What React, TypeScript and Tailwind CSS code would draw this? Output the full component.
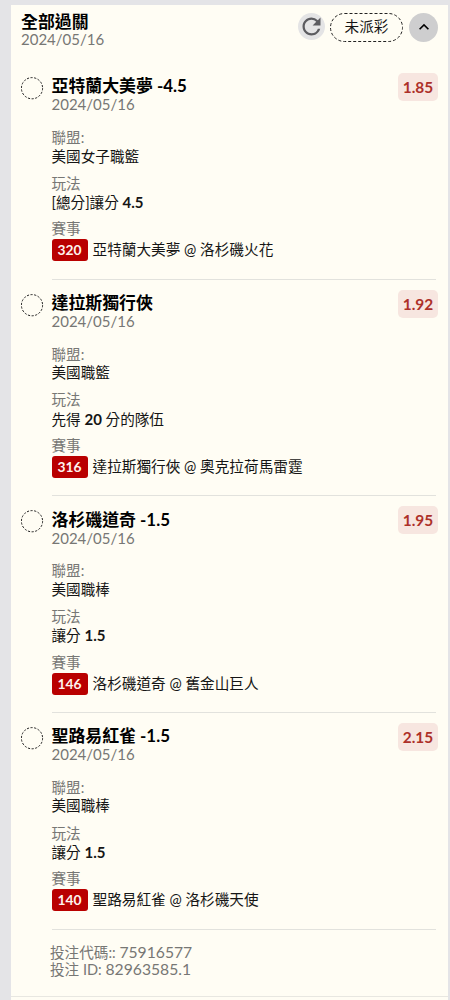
import { MdRefresh, MdKeyboardArrowUp } from "react-icons/md";
import type { ReactNode } from "react";

type Bet = {
  title: string;
  odds: string;
  league: string;
  market: ReactNode;
  code: string;
  match: string;
};

const strong = (text: string) => <b className="text-[15px] font-bold">{text}</b>;

const bets: Bet[] = [
  { title: "亞特蘭大美夢 -4.5", odds: "1.85", league: "美國女子職籃", market: <>[總分]讓分 {strong("4.5")}</>, code: "320", match: "亞特蘭大美夢 @ 洛杉磯火花" },
  { title: "達拉斯獨行俠", odds: "1.92", league: "美國職籃", market: <>先得 {strong("20")} 分的隊伍</>, code: "316", match: "達拉斯獨行俠 @ 奧克拉荷馬雷霆" },
  { title: "洛杉磯道奇 -1.5", odds: "1.95", league: "美國職棒", market: <>讓分 {strong("1.5")}</>, code: "146", match: "洛杉磯道奇 @ 舊金山巨人" },
  { title: "聖路易紅雀 -1.5", odds: "2.15", league: "美國職棒", market: <>讓分 {strong("1.5")}</>, code: "140", match: "聖路易紅雀 @ 洛杉磯天使" },
];

function Field({ label, children }: { label: string; children: ReactNode }) {
  return (
    <div className="mb-[9px]">
      <div className="h-[18.3px] leading-[18.3px] text-[#777774]">{label}</div>
      <div className="h-[18.3px] leading-[18.3px]">{children}</div>
    </div>
  );
}

function BetItem({ bet }: { bet: Bet }) {
  return (
    <section className="flex h-[216.6px] shrink-0 pl-[9.5px] pr-[10px]">
      <svg className="mt-[14px] mr-[8px] h-[23px] w-[23px] shrink-0" viewBox="0 0 23 23" fill="none">
        <circle cx="11" cy="11.2" r="10.6" stroke="#222" strokeWidth="1" strokeDasharray="2.2 1.5" />
      </svg>
      <div className="relative mr-[2px] min-w-0 flex-1 border-b border-[#e2e2dd] pt-[13.2px]">
        <h2 className="h-[19px] text-[16.9px] leading-[19px] font-bold text-black">{bet.title}</h2>
        <div className="mb-[15.5px] h-[18.3px] text-[15px] leading-[18.3px] text-[#777774]">2024/05/16</div>
        <Field label="聯盟:">{bet.league}</Field>
        <Field label="玩法">{bet.market}</Field>
        <div className="h-[18.3px] leading-[18.3px] text-[#777774]">賽事</div>
        <div className="mt-[0.6px] flex items-center gap-[5px] leading-[22px]">
          <span className="h-[22px] w-[36px] rounded-[3px] bg-[#b90000] text-center text-[13.8px] font-bold text-[#fff3ee]">{bet.code}</span>
          <span className="text-[14.65px]">{bet.match}</span>
        </div>
        <span className="absolute top-[10px] right-[-2px] h-[28px] w-[40px] rounded-[5px] bg-[#f7e6e0] text-center text-[15.4px] leading-[28px] font-bold text-[#ad3029]">
          {bet.odds}
        </span>
      </div>
    </section>
  );
}

export default function App() {
  return (
    <div className="h-[1000px] overflow-hidden bg-[#e4e4e7] pt-[5px] pr-[2px] pl-[11px] font-['Lato','Noto_Sans_CJK_TC',sans-serif] text-[14.6px] text-[#151515]" lang="zh-Hant">
      <main className="flex h-[995px] flex-col bg-[#fffdf4]">
        <header className="flex h-[58.3px] shrink-0 items-start justify-between pt-[7.5px] pr-[10px] pl-[10px]">
          <div className="-mt-px">
            <h1 className="h-[18.5px] text-[16.9px] leading-[19px] font-bold text-black">全部過關</h1>
            <div className="text-[15px] leading-[18px] text-[#777774]">2024/05/16</div>
          </div>
          <div className="flex items-center gap-[6px]">
            <button aria-label="重新整理" className="-mr-px -mt-px flex h-[27px] w-[27px] items-center justify-center rounded-full bg-[#e4e4e5] text-[#5c5c60]">
              <MdRefresh size={27} />
            </button>
            <span className="relative flex h-[29px] w-[73px] items-center justify-center">
              <svg className="absolute inset-0" width="73" height="29" fill="none">
                <rect x="0.5" y="0.5" width="72" height="28" rx="14" stroke="#222" strokeDasharray="3 2" />
              </svg>
              未派彩
            </span>
            <button aria-label="收合" className="flex h-[29px] w-[29px] items-center justify-center rounded-full bg-[#cececf] text-black">
              <MdKeyboardArrowUp size={20} />
            </button>
          </div>
        </header>
        {bets.map((bet) => (
          <BetItem key={bet.code} bet={bet} />
        ))}
        <footer className="h-[67px] shrink-0 border-b border-[#e8e7e1] pt-[14.5px] pl-[39px] text-[#777774]">
          <div className="h-[17px] leading-[17px]">投注代碼:: <span className="text-[15.7px]">75916577</span></div>
          <div className="h-[17px] leading-[17px]">投注 ID: <span className="text-[15.7px]">82963585.1</span></div>
        </footer>
      </main>
    </div>
  );
}
